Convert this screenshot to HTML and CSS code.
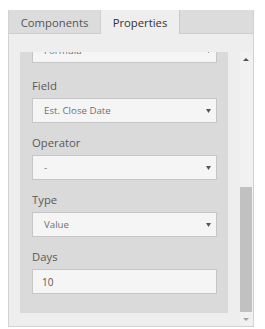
FILE: index.html
```html
<!DOCTYPE html>
<html>
<head>
<meta charset="utf-8">
<link rel="stylesheet" href="styles.css">
</head>
<body>
<div class="panel">
  <div class="tabs">
    <div class="tab tab-components">Components</div>
    <div class="tab tab-properties active">Properties</div>
  </div>
  <div class="tab-body">
    <div class="viewport">
      <div class="group">
        <div class="select"><span>Formula</span><svg class="arrow" width="5" height="4" viewBox="0 0 5 4"><polygon points="0,0 5,0 2.5,4"/></svg></div>
        <div class="label label-first">Field</div>
        <div class="select"><span>Est. Close Date</span><svg class="arrow" width="5" height="4" viewBox="0 0 5 4"><polygon points="0,0 5,0 2.5,4"/></svg></div>
        <div class="label">Operator</div>
        <div class="select"><span>-</span><svg class="arrow" width="5" height="4" viewBox="0 0 5 4"><polygon points="0,0 5,0 2.5,4"/></svg></div>
        <div class="label">Type</div>
        <div class="select"><span>Value</span><svg class="arrow" width="5" height="4" viewBox="0 0 5 4"><polygon points="0,0 5,0 2.5,4"/></svg></div>
        <div class="label">Days</div>
        <input class="input" type="text" value="10">
      </div>
    </div>
    <div class="scrollbar">
      <div class="sb-btn sb-up"><svg width="6" height="3" viewBox="0 0 6 3"><polygon points="0,3 6,3 3,0"/></svg></div>
      <div class="sb-track"><div class="sb-thumb"></div></div>
      <div class="sb-btn sb-down"><svg width="6" height="3" viewBox="0 0 6 3"><polygon points="0,0 6,0 3,3"/></svg></div>
    </div>
  </div>
</div>
</body>
</html>
```
FILE: styles.css
```css
* { box-sizing: border-box; }
html, body { margin: 0; padding: 0; background: #ffffff; }
body {
  padding: 10px 11px 0 8px;
  font-family: "Open Sans", "Noto Sans", sans-serif;
}
.panel {
  width: 246px;
  border: 1px solid #d2d2d2;
  border-top: none;
  background: #eeeeee;
}
.tabs {
  display: flex;
  align-items: flex-start;
  height: 24px;
  background: #dcdcdc;
  border-bottom: 1px solid #cdcdcd;
}
.tab {
  height: 23px;
  font-size: 11.3px;
  line-height: 21px;
  padding-top: 2px;
  color: #555555;
  text-align: center;
  white-space: nowrap;
}
.tab-components { width: 91px; }
.tab-properties { width: 80px; }
.tab.active {
  height: 24px;
  background: #eeeeee;
  color: #333333;
  border-left: 1px solid #d0d0d0;
  border-right: 1px solid #cacaca;
}
.tab-body {
  display: flex;
  padding-top: 18px;
}
.viewport {
  flex: 1;
  height: 274px;
  overflow: hidden;
  display: flex;
  flex-direction: column;
  justify-content: flex-end;
  padding: 0 12px 13px 11px;
}
.group {
  flex-shrink: 0;
  background: #dadada;
  padding: 12px 11px 19px 12px;
}
.label {
  font-size: 11.3px;
  line-height: 16px;
  color: #595959;
  margin: 12px 0 4px;
}
.label-first { margin-top: 15px; }
.select {
  height: 25px;
  border: 1px solid #c6c6c6;
  background: #f5f5f5;
  display: flex;
  align-items: center;
  padding-left: 11px;
  font-size: 9.7px;
  color: #707070;
}
.arrow {
  margin-left: auto;
  margin-right: 5px;
  fill: #555555;
}
.input {
  display: block;
  width: 100%;
  height: 25px;
  margin: 0;
  border: 1px solid #c6c6c6;
  background: #f5f5f5;
  padding: 0 0 0 9px;
  font-family: "Open Sans", "Noto Sans", sans-serif;
  font-size: 10px;
  color: #555555;
  outline: none;
}
.scrollbar {
  width: 13px;
  height: 274px;
  display: flex;
  flex-direction: column;
  background: #f1f1f1;
}
.sb-btn {
  height: 14px;
  display: flex;
  align-items: center;
  justify-content: center;
  padding-right: 1px;
}
.sb-up svg { fill: #505050; }
.sb-down svg { fill: #a3a3a3; }
.sb-track {
  flex: 1;
  display: flex;
  flex-direction: column;
  justify-content: flex-end;
  padding-right: 1px;
}
.sb-thumb {
  height: 125px;
  background: #c1c1c1;
}
```
